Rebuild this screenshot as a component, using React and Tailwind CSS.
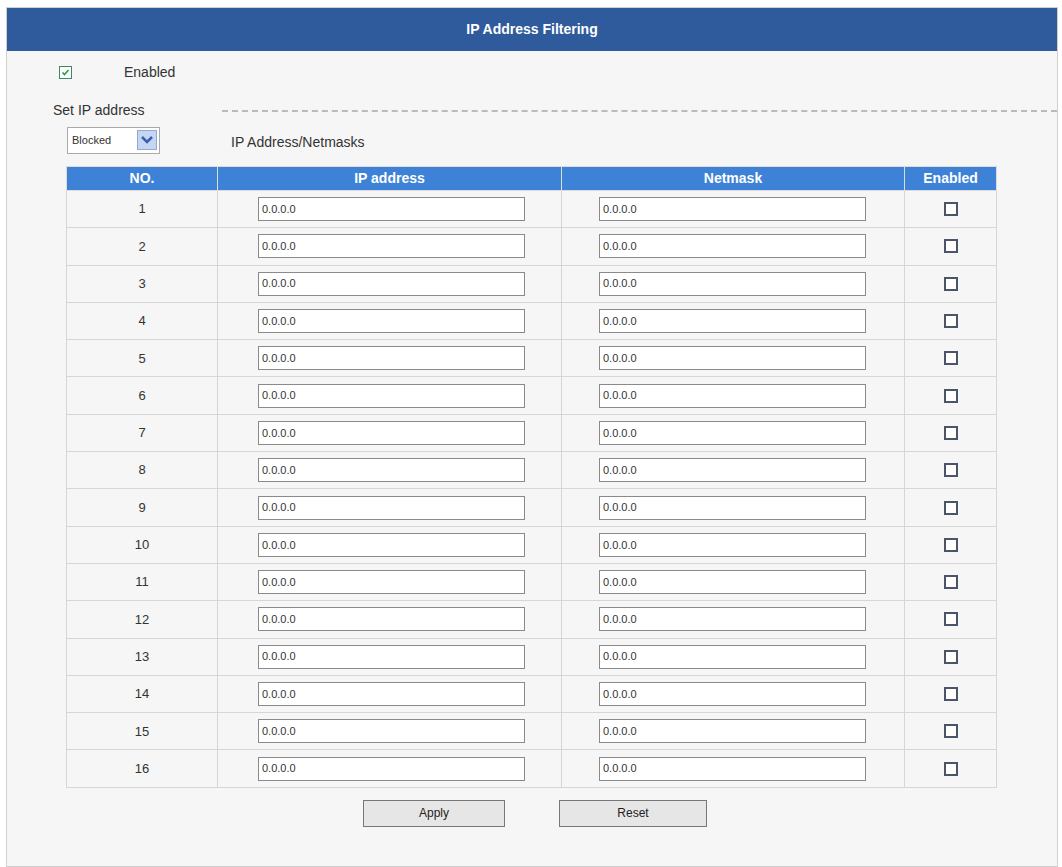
export default function App() {
  const rows = Array.from({ length: 16 }, (_, i) => i + 1);
  const f = { fontFamily: '"Liberation Sans", Arial, sans-serif' };
  return (
    <div className="w-[1062px] h-[867px] bg-white pt-[7px] pl-[6px]" style={f}>
      <div className="w-[1052px] h-[860px] bg-[#f6f6f6] border border-[#d0d0d0] flex flex-col">
        <div className="h-[43px] bg-[#2f5b9c] flex items-center justify-center text-white font-bold text-[14px]">IP Address Filtering</div>
        <div className="flex items-center h-[30px] mt-[6px] pl-[52px] text-[14px] text-[#333]">
          <span className="w-[13px] h-[13px] border border-[#3a8a6a] bg-white flex items-center justify-center">
            <svg width="9" height="9" viewBox="0 0 9 9"><path d="M1.5 4.5 L3.5 6.5 L7.5 2" stroke="#2a9a3a" strokeWidth="1.6" fill="none"/></svg>
          </span>
          <span className="ml-[52px]">Enabled</span>
        </div>
        <div className="flex items-center h-[18px] mt-[14px] pl-[46px] text-[14px] text-[#333]">
          <span>Set IP address</span>
          <div className="flex-1 ml-[77px] mt-[2px] border-t-2 border-dashed border-[#bbb]"></div>
        </div>
        <div className="flex items-center mt-[6px] h-[30px] pl-[60px] text-[14px] text-[#333]">
          <div className="w-[93px] h-[27px] bg-white border border-[#aaa] flex items-center justify-between pl-[4px] pr-[2px]">
            <span className="text-[11px]">Blocked</span>
            <span className="w-[20px] h-[20px] bg-[#c6d6f2] border border-[#8fa8d8] flex items-center justify-center">
              <svg width="12" height="8" viewBox="0 0 12 8"><path d="M1 1 L6 6 L11 1" stroke="#3a5fb0" strokeWidth="2.5" fill="none"/></svg>
            </span>
          </div>
          <span className="ml-[71px] mt-[4px]">IP Address/Netmasks</span>
        </div>
        <div className="ml-[59px] mt-[11px] w-[931px]">
          <table className="w-full border-collapse text-[13px] text-[#333]">
            <thead>
              <tr className="h-[24px] bg-[#3d82d6] text-white font-bold text-[14px]">
                <th className="w-[151px] border border-[#dcdcdc]">NO.</th>
                <th className="w-[344px] border border-[#dcdcdc]">IP address</th>
                <th className="w-[343px] border border-[#dcdcdc]">Netmask</th>
                <th className="border border-[#dcdcdc]">Enabled</th>
              </tr>
            </thead>
            <tbody>
              {rows.map((n) => (
                <tr key={n} className="h-[37.3px]">
                  <td className="border border-[#d6d6d6] text-center">{n}</td>
                  <td className="border border-[#d6d6d6] pl-[40px]">
                    <div className="w-[267px] h-[24px] bg-white border border-[#8a8a8a] flex items-center pl-[3px] text-[11px]">0.0.0.0</div>
                  </td>
                  <td className="border border-[#d6d6d6] pl-[37px]">
                    <div className="w-[267px] h-[24px] bg-white border border-[#8a8a8a] flex items-center pl-[3px] text-[11px]">0.0.0.0</div>
                  </td>
                  <td className="border border-[#d6d6d6]">
                    <div className="mx-auto w-[14px] h-[14px] border-2 border-[#4a5568] bg-white"></div>
                  </td>
                </tr>
              ))}
            </tbody>
          </table>
        </div>
        <div className="flex mt-[12px] pl-[356px] gap-[54px] text-[12px] text-[#222]">
          <div className="w-[142px] h-[27px] bg-[#e6e6e6] border border-[#777] flex items-center justify-center">Apply</div>
          <div className="w-[148px] h-[27px] bg-[#e6e6e6] border border-[#777] flex items-center justify-center">Reset</div>
        </div>
      </div>
    </div>
  );
}
